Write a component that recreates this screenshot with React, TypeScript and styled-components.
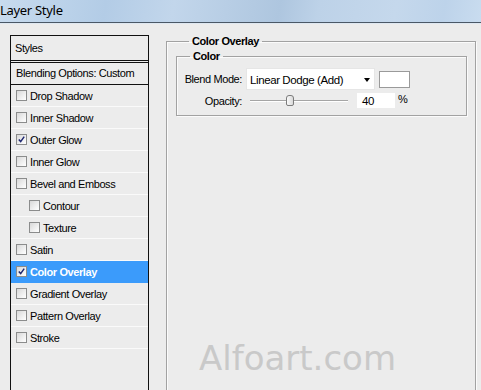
import React from 'react';
import styled, { createGlobalStyle } from 'styled-components';

const GlobalStyle = createGlobalStyle`
  html, body {
    margin: 0;
    padding: 0;
    background: #ececec;
    overflow: hidden;
  }
  body {
    font-family: "Liberation Sans", Arial, sans-serif;
    font-size: 11px;
    letter-spacing: -0.4px;
    color: #000;
  }
`;

const Window = styled.div`
  width: 481px;
  height: 390px;
  overflow: hidden;
`;

const TitleBar = styled.div`
  height: 22px;
  border-bottom: 1px solid #4b5866;
  box-shadow: 0 1px 0 #dfe8f1;
  background: linear-gradient(
    100deg,
    #c8dbee 0%,
    #bcd3ea 12%,
    #b3cce6 22%,
    #c2d6eb 36%,
    #aec6df 58%,
    #bdd2e8 66%,
    #c5d8ec 82%,
    #bdd3ea 92%,
    #c9dcef 100%
  );
  display: flex;
  align-items: center;
`;

const Title = styled.span`
  font-family: "Noto Sans", "Open Sans", sans-serif;
  font-size: 13px;
  letter-spacing: -0.3px;
  margin-left: 0;
  margin-top: -2px;
`;

const Main = styled.div`
  display: flex;
  align-items: flex-start;
  gap: 17px;
  padding: 12px 0 0 10px;
`;

const StylesPanel = styled.div`
  width: 139px;
  height: 400px;
  box-sizing: border-box;
  border: 1px solid #111;
  border-bottom: none;
`;

const PanelHeader = styled.div`
  height: 24px;
  line-height: 24px;
  padding-left: 4px;
  border-bottom: 3px double #111;
`;

const BlendingRow = styled.div`
  height: 21px;
  line-height: 21px;
  padding-left: 5px;
  border-bottom: 1px solid #111;
`;

const EffectRow = styled.div<{ $indent?: boolean; $selected?: boolean }>`
  height: 21px;
  display: flex;
  align-items: center;
  gap: 3px;
  padding-left: ${p => (p.$indent ? '18px' : '5px')};
  border-bottom: 1px solid ${p => (p.$selected ? '#3b9bfb' : '#fafafa')};
  background: ${p => (p.$selected ? '#3b9bfb' : 'transparent')};
  color: ${p => (p.$selected ? '#fff' : '#000')};
  font-weight: ${p => (p.$selected ? 'bold' : 'normal')};
`;

const CheckBox = styled.span`
  width: 11px;
  height: 11px;
  box-sizing: border-box;
  border: 1px solid #8b8c8c;
  background: linear-gradient(135deg, #d8d8d8 0%, #f4f4f4 70%, #fff 100%);
  display: flex;
  align-items: center;
  justify-content: center;
  flex-shrink: 0;
`;

const Group = styled.fieldset<{ $width: number }>`
  width: ${p => p.$width}px;
  box-sizing: border-box;
  margin: 0;
  border: 1px solid #a2a2a2;
  box-shadow: inset 1px 1px 0 #fbfbfb, 1px 1px 0 #fbfbfb;
  min-width: 0;
`;

const OuterGroup = styled(Group)`
  height: 420px;
  padding: 2px 8px 0 9px;
`;

const InnerGroup = styled(Group)`
  padding: 5px 0 7px 0;
`;

const Legend = styled.legend<{ $offset: number }>`
  font-weight: bold;
  line-height: 13px;
  padding: 0 3px;
  margin-left: ${p => p.$offset}px;
`;

const FieldRow = styled.div`
  display: grid;
  grid-template-columns: 65px auto;
  column-gap: 4px;
  align-items: center;
  & + & {
    margin-top: 3px;
  }
`;

const Label = styled.span`
  text-align: right;
`;

const Controls = styled.div`
  display: flex;
  align-items: center;
`;

const SelectBox = styled.div`
  width: 129px;
  height: 22px;
  box-sizing: border-box;
  background: #fff;
  border: 1px solid #e6e6e6;
  display: flex;
  align-items: center;
  justify-content: space-between;
  padding: 1px 4px 0 3px;
  font-size: 11.5px;
`;

const Arrow = styled.span`
  width: 0;
  height: 0;
  border-left: 3.5px solid transparent;
  border-right: 3.5px solid transparent;
  border-top: 4px solid #000;
`;

const Swatch = styled.div`
  width: 31px;
  height: 17px;
  box-sizing: border-box;
  margin-left: 4px;
  background: #fff;
  border: 1px solid #9a9a9a;
`;

const SliderTrack = styled.div`
  position: relative;
  width: 98px;
  height: 2px;
  margin-left: 4px;
  border-top: 1px solid #a5a5a5;
  border-bottom: 1px solid #fff;
  box-sizing: border-box;
`;

const SliderThumb = styled.span`
  position: absolute;
  top: -6px;
  width: 8px;
  height: 11px;
  box-sizing: border-box;
  border: 1px solid #7c7c7c;
  border-radius: 3px 3px 2px 2px;
  background: linear-gradient(to right, #fafafa, #d9d9d9);
`;

const NumberInput = styled.div`
  width: 38px;
  height: 15px;
  margin-left: 9px;
  background: #fff;
  box-sizing: border-box;
  padding: 2px 0 0 5px;
  line-height: 13px;
  font-size: 11.5px;
`;

const Percent = styled.span`
  margin-left: 3px;
  margin-top: -4px;
`;

const Watermark = styled.div`
  margin: 225px 0 0 23px;
  font-family: "DejaVu Sans", sans-serif;
  font-size: 34px;
  line-height: 34px;
  letter-spacing: 0;
  color: #c9c9c9;
`;

const CheckMark: React.FC = () => (
  <svg width="9" height="9" viewBox="0 0 9 9">
    <path d="M1.8 4.4 L3.7 6.6 L7.2 1.6" fill="none" stroke="#1d2670" strokeWidth="1.5" />
  </svg>
);

const effects = [
  { name: 'Drop Shadow' },
  { name: 'Inner Shadow' },
  { name: 'Outer Glow', checked: true },
  { name: 'Inner Glow' },
  { name: 'Bevel and Emboss' },
  { name: 'Contour', indent: true },
  { name: 'Texture', indent: true },
  { name: 'Satin' },
  { name: 'Color Overlay', checked: true, selected: true },
  { name: 'Gradient Overlay' },
  { name: 'Pattern Overlay' },
  { name: 'Stroke' },
];

const opacity = 40;

const App: React.FC = () => {
  return (
    <Window>
      <GlobalStyle />
      <TitleBar>
        <Title>Layer Style</Title>
      </TitleBar>
      <Main>
        <StylesPanel>
          <PanelHeader>Styles</PanelHeader>
          <BlendingRow>Blending Options: Custom</BlendingRow>
          {effects.map(e => (
            <EffectRow key={e.name} $indent={e.indent} $selected={e.selected}>
              <CheckBox>{e.checked && <CheckMark />}</CheckBox>
              <span>{e.name}</span>
            </EffectRow>
          ))}
        </StylesPanel>
        <OuterGroup $width={310}>
          <Legend $offset={13}>Color Overlay</Legend>
          <InnerGroup $width={291}>
            <Legend $offset={13}>Color</Legend>
            <FieldRow>
              <Label>Blend Mode:</Label>
              <Controls>
                <SelectBox>
                  <span>Linear Dodge (Add)</span>
                  <Arrow />
                </SelectBox>
                <Swatch />
              </Controls>
            </FieldRow>
            <FieldRow>
              <Label>Opacity:</Label>
              <Controls>
                <SliderTrack>
                  <SliderThumb style={{ left: `${Math.round(opacity * 0.9)}px` }} />
                </SliderTrack>
                <NumberInput>{opacity}</NumberInput>
                <Percent>%</Percent>
              </Controls>
            </FieldRow>
          </InnerGroup>
          <Watermark>Alfoart.com</Watermark>
        </OuterGroup>
      </Main>
    </Window>
  );
};

export default App;
